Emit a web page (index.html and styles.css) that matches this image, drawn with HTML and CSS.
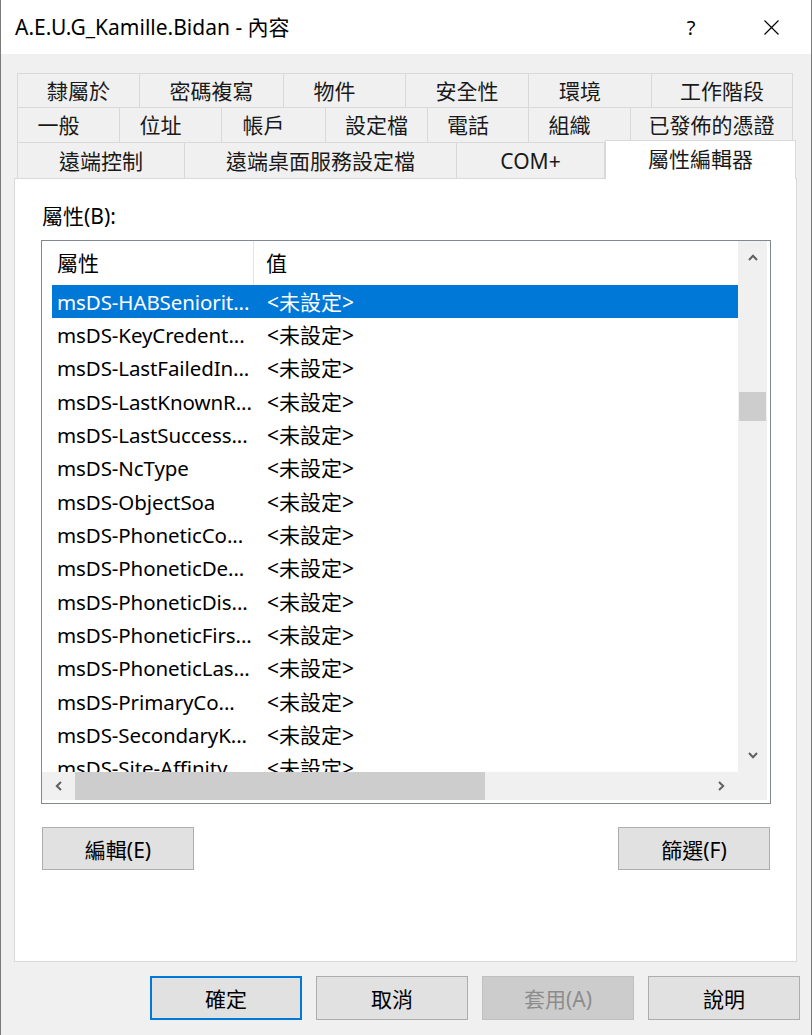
FILE: index.html
```html
<!DOCTYPE html>
<html lang="zh-Hant">
<head>
    <meta charset="UTF-8">
    <title>A.E.U.G_Kamille.Bidan - 內容</title>
    <link rel="stylesheet" href="styles.css">
</head>
<body>
    <div class="window">
        <div class="titlebar">
            <div class="title">A.E.U.G_Kamille.Bidan - 內容</div>
            <div class="caption-btn">?</div>
            <div class="caption-btn">
                <svg width="15" height="15" viewBox="0 0 15 15">
                    <path d="M0.5 0.5 L14.5 14.5 M14.5 0.5 L0.5 14.5" stroke="#000" stroke-width="1.2" fill="none"/>
                </svg>
            </div>
        </div>

        <div class="client">
            <!-- 탭 3줄 -->
            <div class="tabs">
                <div class="tab-row r1">
                    <div class="tab">隸屬於</div>
                    <div class="tab">密碼複寫</div>
                    <div class="tab short">物件</div>
                    <div class="tab">安全性</div>
                    <div class="tab short">環境</div>
                    <div class="tab">工作階段</div>
                </div>
                <div class="tab-row r2">
                    <div class="tab short">一般</div>
                    <div class="tab short">位址</div>
                    <div class="tab short">帳戶</div>
                    <div class="tab">設定檔</div>
                    <div class="tab short">電話</div>
                    <div class="tab short">組織</div>
                    <div class="tab">已發佈的憑證</div>
                </div>
                <div class="tab-row r3">
                    <div class="tab">遠端控制</div>
                    <div class="tab">遠端桌面服務設定檔</div>
                    <div class="tab">COM+</div>
                    <div class="tab active">屬性編輯器</div>
                </div>
            </div>

            <div class="panel">
                <div class="field-label">屬性(B):</div>

                <div class="listview">
                    <div class="lv-body">
                        <div class="lv-header">
                            <div class="hcol name">屬性</div>
                            <div class="hcol value">值</div>
                        </div>
                        <div class="lv-rows">
                            <div class="lv-row selected"><span class="name">msDS-HABSeniorit...</span><span class="value">&lt;未設定&gt;</span></div>
                            <div class="lv-row"><span class="name">msDS-KeyCredent...</span><span class="value">&lt;未設定&gt;</span></div>
                            <div class="lv-row"><span class="name">msDS-LastFailedIn...</span><span class="value">&lt;未設定&gt;</span></div>
                            <div class="lv-row"><span class="name">msDS-LastKnownR...</span><span class="value">&lt;未設定&gt;</span></div>
                            <div class="lv-row"><span class="name">msDS-LastSuccess...</span><span class="value">&lt;未設定&gt;</span></div>
                            <div class="lv-row"><span class="name">msDS-NcType</span><span class="value">&lt;未設定&gt;</span></div>
                            <div class="lv-row"><span class="name">msDS-ObjectSoa</span><span class="value">&lt;未設定&gt;</span></div>
                            <div class="lv-row"><span class="name">msDS-PhoneticCo...</span><span class="value">&lt;未設定&gt;</span></div>
                            <div class="lv-row"><span class="name">msDS-PhoneticDe...</span><span class="value">&lt;未設定&gt;</span></div>
                            <div class="lv-row"><span class="name">msDS-PhoneticDis...</span><span class="value">&lt;未設定&gt;</span></div>
                            <div class="lv-row"><span class="name">msDS-PhoneticFirs...</span><span class="value">&lt;未設定&gt;</span></div>
                            <div class="lv-row"><span class="name">msDS-PhoneticLas...</span><span class="value">&lt;未設定&gt;</span></div>
                            <div class="lv-row"><span class="name">msDS-PrimaryCo...</span><span class="value">&lt;未設定&gt;</span></div>
                            <div class="lv-row"><span class="name">msDS-SecondaryK...</span><span class="value">&lt;未設定&gt;</span></div>
                            <div class="lv-row"><span class="name">msDS-Site-Affinity</span><span class="value">&lt;未設定&gt;</span></div>
                        </div>
                    </div>

                    <div class="vscroll">
                        <div class="sb-arrow">
                            <svg width="10" height="7" viewBox="0 0 10 7"><polyline points="1,6 5,1.8 9,6" stroke="#606060" stroke-width="2" fill="none"/></svg>
                        </div>
                        <div class="sb-thumb v"></div>
                        <div class="sb-space"></div>
                        <div class="sb-arrow">
                            <svg width="10" height="7" viewBox="0 0 10 7"><polyline points="1,1 5,5.2 9,1" stroke="#606060" stroke-width="2" fill="none"/></svg>
                        </div>
                    </div>

                    <div class="hscroll">
                        <div class="sb-arrow">
                            <svg width="7" height="10" viewBox="0 0 7 10"><polyline points="6,1 1.8,5 6,9" stroke="#606060" stroke-width="2" fill="none"/></svg>
                        </div>
                        <div class="sb-thumb h"></div>
                        <div class="sb-space"></div>
                        <div class="sb-arrow">
                            <svg width="7" height="10" viewBox="0 0 7 10"><polyline points="1,1 5.2,5 1,9" stroke="#606060" stroke-width="2" fill="none"/></svg>
                        </div>
                    </div>

                    <div class="sb-corner"></div>
                </div>

                <div class="panel-buttons">
                    <button class="btn">編輯(E)</button>
                    <button class="btn">篩選(F)</button>
                </div>
            </div>

            <div class="dialog-buttons">
                <button class="btn default">確定</button>
                <button class="btn">取消</button>
                <button class="btn" disabled>套用(A)</button>
                <button class="btn">說明</button>
            </div>
        </div>
    </div>
</body>
</html>
```

FILE: styles.css
```css
* {
    margin: 0;
    padding: 0;
    box-sizing: border-box;
}

body {
    font-family: "Noto Sans", "Noto Sans CJK TC", sans-serif;
    font-size: 21px;
    color: #000;
    background: #f0f0f0;
}

.window {
    width: 812px;
    height: 1035px;
    border-left: 1px solid #7a7a7a;
    border-right: 1px solid #7a7a7a;
    background: #f0f0f0;
    overflow: hidden;
}

/* 타이틀 바 */
.titlebar {
    height: 54px;
    background: white;
    display: flex;
    align-items: center;
}

.title {
    flex: 1;
    padding-left: 14px;
    font-size: 21px;
    line-height: 24px;
}

.caption-btn {
    width: 80px;
    height: 54px;
    display: flex;
    align-items: center;
    justify-content: center;
    font-size: 20px;
}

/* 탭 */
.client {
    padding-top: 19px;
}

.tabs {
    margin-left: 16px;
}

.tab-row {
    display: grid;
}

.r1 {
    height: 34px;
    grid-template-columns: 123px 144px 122px 123px 123px 141px;
}

.r2 {
    height: 35px;
    grid-template-columns: 103px 102px 104px 102px 101px 102px 162px;
}

.r3 {
    height: 36px;
    grid-template-columns: 168px 272px 148px 191px;
}

.tab {
    display: flex;
    align-items: center;
    justify-content: center;
    border-top: 1px solid #d9d9d9;
    border-right: 1px solid #d9d9d9;
    color: #1a1a1a;
    line-height: 24px;
    white-space: nowrap;
}

.tab:first-child {
    border-left: 1px solid #d9d9d9;
}

/* 두 글자 탭은 글자가 왼쪽으로 치우쳐 있음 */
.tab.short {
    padding-right: 20px;
}

.tab.active {
    position: relative;
    z-index: 1;
    align-self: start;
    height: 39px;
    margin-top: -2px;
    padding-bottom: 2px;
    background: white;
    border-left: 1px solid #d9d9d9;
}

/* 패널 */
.panel {
    margin-left: 13px;
    width: 783px;
    height: 784px;
    background: white;
    border: 1px solid #d9d9d9;
    padding: 25px 0 0 26px;
}

.field-label {
    line-height: 25px;
    padding-left: 1px;
    margin-bottom: 11px;
}

.listview {
    width: 730px;
    height: 564px;
    border: 1px solid #828790;
    padding: 0 3px 3px 0;
    display: grid;
    grid-template-columns: 1fr 29px;
    grid-template-rows: 1fr 28px;
    background: white;
}

.lv-body {
    overflow: hidden;
}

.lv-header {
    height: 44px;
    display: flex;
}

.hcol {
    display: flex;
    align-items: center;
    line-height: 24px;
}

.hcol.name {
    width: 212px;
    padding-left: 15px;
    border-right: 1px solid #e5e5e5;
}

.hcol.value {
    padding-left: 12px;
}

.lv-row {
    margin-left: 10px;
    height: 33.33px;
    display: flex;
    align-items: center;
    line-height: 24px;
    white-space: nowrap;
}

.lv-row.selected {
    background: #0078d7;
    color: white;
}

.lv-row .name {
    flex: none;
    width: 202px;
    padding-left: 5px;
    font-size: 20.5px;
    letter-spacing: -0.1px;
}

.lv-row .value {
    padding-left: 13px;
}

/* 스크롤바 */
.vscroll,
.hscroll {
    background: #f0f0f0;
    display: flex;
}

.vscroll {
    flex-direction: column;
}

.sb-arrow {
    flex: none;
    width: 29px;
    height: 33px;
    display: flex;
    align-items: center;
    justify-content: center;
}

.hscroll .sb-arrow {
    width: 33px;
    height: 28px;
}

.sb-space {
    flex: 1;
}

.sb-thumb {
    background: #cdcdcd;
    flex: none;
}

.sb-thumb.v {
    height: 29px;
    margin: 118px 1px 0;
}

.sb-thumb.h {
    width: 410px;
}

.sb-corner {
    background: #f0f0f0;
}

.panel-buttons {
    width: 730px;
    display: flex;
    justify-content: space-between;
    padding: 0 1px;
    margin-top: 23px;
}

/* 버튼 */
.btn {
    width: 152px;
    height: 43px;
    background: #e1e1e1;
    border: 1px solid #adadad;
    font-family: inherit;
    font-size: 21px;
    color: #000;
}

.btn.default {
    border: 2px solid #0078d7;
}

.btn:disabled {
    background: #cccccc;
    border-color: #bfbfbf;
    color: #8c8c8c;
}

.dialog-buttons {
    display: flex;
    justify-content: flex-end;
    gap: 14px;
    padding: 14px 11px 0 0;
}

.dialog-buttons .btn {
    height: 44px;
}
```
